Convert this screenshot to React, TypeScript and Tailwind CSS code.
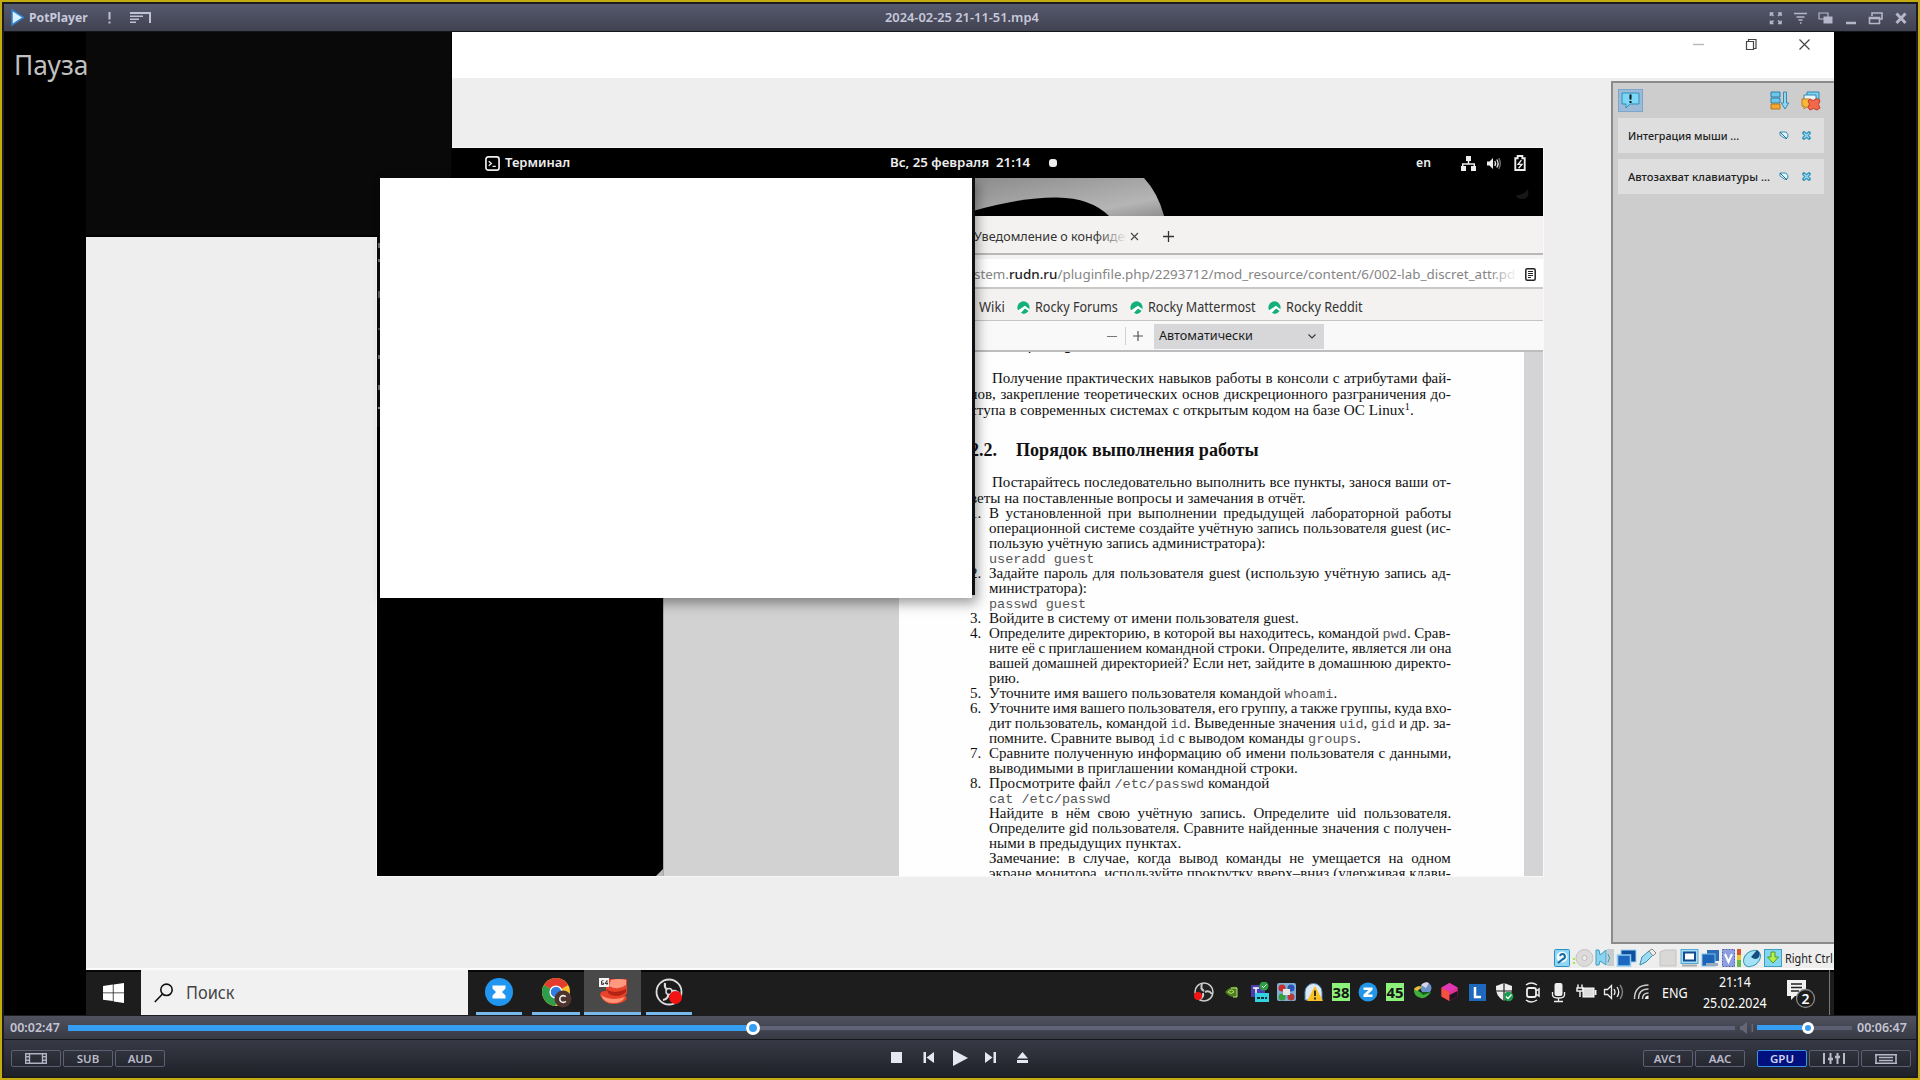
import React, { useLayoutEffect, useRef, useState } from "react";

type FitProps = { w: number; className?: string; justify?: boolean; children: React.ReactNode };

/* Text set to an exact measure, either by stretching glyphs or by opening the word gaps. */
function Fit({ w, className = "", justify = false, children }: FitProps) {
  const ref = useRef<HTMLSpanElement>(null);
  const [style, setStyle] = useState<React.CSSProperties>({});
  useLayoutEffect(() => {
    const el = ref.current;
    if (!el) return;
    const natural = el.offsetWidth;
    const gaps = (el.textContent || "").split(" ").length - 1;
    if (justify && gaps > 0) setStyle({ wordSpacing: (w - natural) / gaps });
    else setStyle({ transform: `scaleX(${w / natural})` });
  }, [w, justify]);
  return (
    <span className={"block shrink-0 whitespace-nowrap " + className} style={{ width: w }}>
      <span ref={ref} className="inline-block origin-left whitespace-nowrap" style={style}>
        {children}
      </span>
    </span>
  );
}

const M = ({ children }: { children: React.ReactNode }) => (
  <span className="font-['Liberation_Mono',monospace] text-[13.5px] leading-none text-[#555]">{children}</span>
);

type Line = { n?: string; w: number; j?: boolean; t: React.ReactNode };

const listLines: Line[] = [
  { n: "1.", w: 462, j: true, t: "В установленной при выполнении предыдущей лабораторной работы" },
  { w: 462, j: true, t: "операционной системе создайте учётную запись пользователя guest (ис-" },
  { w: 276, t: "пользую учётную запись администратора):" },
  { w: 105, t: <M>useradd guest</M> },
  { n: "2.", w: 462, j: true, t: "Задайте пароль для пользователя guest (использую учётную запись ад-" },
  { w: 98, t: "министратора):" },
  { w: 97, t: <M>passwd guest</M> },
  { n: "3.", w: 310, t: "Войдите в систему от имени пользователя guest." },
  { n: "4.", w: 462, j: true, t: <>Определите директорию, в которой вы находитесь, командой <M>pwd</M>. Срав-</> },
  { w: 462, j: true, t: "ните её с приглашением командной строки. Определите, является ли она" },
  { w: 462, j: true, t: "вашей домашней директорией? Если нет, зайдите в домашнюю директо-" },
  { w: 30, t: "рию." },
  { n: "5.", w: 348, t: <>Уточните имя вашего пользователя командой <M>whoami</M>.</> },
  { n: "6.", w: 462, j: true, t: "Уточните имя вашего пользователя, его группу, а также группы, куда вхо-" },
  { w: 462, j: true, t: <>дит пользователь, командой <M>id</M>. Выведенные значения <M>uid</M>, <M>gid</M> и др. за-</> },
  { w: 372, t: <>помните. Сравните вывод <M>id</M> с выводом команды <M>groups</M>.</> },
  { n: "7.", w: 462, j: true, t: "Сравните полученную информацию об имени пользователя с данными," },
  { w: 309, t: "выводимыми в приглашении командной строки." },
  { n: "8.", w: 280, t: <>Просмотрите файл <M>/etc/passwd</M> командой</> },
  { w: 122, t: <M>cat /etc/passwd</M> },
  { w: 462, j: true, t: "Найдите в нём свою учётную запись. Определите uid пользователя." },
  { w: 462, j: true, t: "Определите gid пользователя. Сравните найденные значения с получен-" },
  { w: 192, t: "ными в предыдущих пунктах." },
  { w: 462, j: true, t: "Замечание: в случае, когда вывод команды не умещается на одном" },
  { w: 462, j: true, t: "экране монитора, используйте прокрутку вверх–вниз (удерживая клави-" },
];

function DocumentPage() {
  return (
    <div className="h-full w-[625px] overflow-hidden bg-[#fefefe] pl-[71px] font-['Liberation_Serif',serif] text-[15px] text-[#111]">
      <div className="-mt-[18px] h-[18px] pl-[46px] text-[18px] leading-[18px] font-bold">
        <Fit w={112}>Цель работы</Fit>
      </div>
      <div className="mt-[18px] leading-[16px]">
        <div className="pl-[22px]"><Fit w={459} justify>Получение практических навыков работы в консоли с атрибутами фай-</Fit></div>
        <Fit w={481} justify>лов, закрепление теоретических основ дискреционного разграничения до-</Fit>
        <Fit w={444}>ступа в современных системах с открытым кодом на базе ОС Linux<sup className="top-[-5px] text-[10px] leading-none">1</sup>.</Fit>
      </div>
      <div className="mt-[23px] flex h-[18px] gap-[19px] text-[18px] leading-[18px] font-bold">
        <Fit w={27}>2.2.</Fit>
        <Fit w={243}>Порядок выполнения работы</Fit>
      </div>
      <div className="mt-[16px] leading-[15.5px]">
        <div className="pl-[22px]"><Fit w={459} justify>Постарайтесь последовательно выполнить все пункты, занося ваши от-</Fit></div>
        <Fit w={335}>веты на поставленные вопросы и замечания в отчёт.</Fit>
      </div>
      {listLines.map((l, i) => (
        <div key={i} className="flex h-[15.02px] leading-[15px]">
          <span className="w-[19px] shrink-0">{l.n}</span>
          <Fit w={l.w} justify={l.j}>{l.t}</Fit>
        </div>
      ))}
    </div>
  );
}

const RockyMark = () => (
  <svg viewBox="0 0 14 14" className="h-[13px] w-[13px]">
    <circle cx="7" cy="7" r="6.600" fill="#14b07c" />
    <path d="M.5 10.500 8.500 5l5 4-1 1.800-3.800-2.800-5.200 5.500z" fill="#fff" />
    <path d="M6 13.500 9 10.800l2 1.700q-2 1.500-5 1z" fill="#14b07c" />
  </svg>
);

function Browser() {
  const marks: [string, number][] = [["Rocky Forums", 83], ["Rocky Mattermost", 108], ["Rocky Reddit", 77]];
  return (
    <div className="flex h-full w-[880px] flex-col font-['Noto_Sans',sans-serif] text-[13px] text-[#333]">
      <div className="flex h-[39px] items-center border-b-2 border-[#b9b8b6] bg-[#f4f2f0] pt-[4px] pl-[311px]">
        <div className="relative">
          <Fit w={150}>Уведомление о конфиде</Fit>
          <span className="absolute inset-y-0 right-0 w-[28px] bg-gradient-to-r from-transparent to-[#f4f2f0]/90" />
        </div>
        <svg viewBox="0 0 9 9" className="ml-[6px] h-[9px] w-[9px]" stroke="#444" strokeWidth="1.1"><path d="M1 1l7 7M8 1L1 8" /></svg>
        <svg viewBox="0 0 11 11" className="ml-[24px] h-[11px] w-[11px]" stroke="#333" strokeWidth="1.3"><path d="M5.5 0v11M0 5.5h11" /></svg>
      </div>
      <div className="flex h-[34px] items-center border-t-[4px] border-b-2 border-t-[#f3f3f2] border-b-[#c9c8c6] bg-white pt-[3px] pl-[311px] text-[#858585]">
        <div className="relative">
          <Fit w={541}>
            stem.<span className="font-medium text-[#1d1d1d]">rudn.ru</span>/pluginfile.php/2293712/mod_resource/content/6/002-lab_discret_attr.pd
          </Fit>
          <span className="absolute inset-y-0 right-0 w-[26px] bg-gradient-to-r from-transparent to-white/90" />
        </div>
        <svg viewBox="0 0 11 13" className="ml-[10px] h-[13px] w-[11px]" fill="none" stroke="#222" strokeWidth="1.5">
          <rect x="0.8" y="0.8" width="9.4" height="11.4" rx="1.5" />
          <path d="M3 3.5h5M3 5.5h5M3 7.5h5M3 9.5h3" strokeWidth="1" />
        </svg>
      </div>
      <div className="flex h-[32px] items-center border-b border-[#c6c5c3] bg-[#f4f2f0] pt-[5px] pl-[316px] text-[13.5px]">
        <Fit w={26}>Wiki</Fit>
        {marks.map(([t, w]) => (
          <div key={t} className="flex items-center gap-[5px] pl-[12px]"><RockyMark /><Fit w={w}>{t}</Fit></div>
        ))}
      </div>
      <div className="flex h-[31px] items-center border-b-2 border-[#bdbdbf] bg-[#f9f9fa] pt-px pl-[444px]">
        <span className="h-px w-[10px] bg-[#777]" />
        <span className="ml-[8px] h-[18px] w-px bg-[#d2d2d2]" />
        <svg viewBox="0 0 10 10" className="ml-[7px] h-[10px] w-[10px]" stroke="#555" strokeWidth="1.2"><path d="M5 0v10M0 5h10" /></svg>
        <div className="ml-[11px] flex h-[25px] w-[170px] items-center justify-between bg-[#d7d7da] pr-[8px] pl-[5px] text-[12.5px] text-[#1c1c1c]">
          <Fit w={94}>Автоматически</Fit>
          <svg viewBox="0 0 8 5" className="h-[5px] w-[8px]" fill="none" stroke="#333" strokeWidth="1.1"><path d="M.5.5 4 4 7.5.5" /></svg>
        </div>
      </div>
      <div className="flex min-h-0 flex-1">
        <div className="w-[236px] border-l border-[#aaa] bg-[#d2d2d2]" />
        <DocumentPage />
        <div className="w-[19px] bg-[#d4d4d6]" />
      </div>
    </div>
  );
}

function GuestScreen() {
  return (
    <div className="mt-[70px] ml-[291px] flex h-[728px] w-[1166px] flex-col bg-black outline outline-[#f8f8f8]">
      <div className="flex h-[30px] items-center font-['Noto_Sans',sans-serif] text-[13px] font-semibold text-[#eee]">
        <svg viewBox="0 0 16 16" className="ml-[108px] h-[15px] w-[15px]" fill="none" stroke="#eee" strokeWidth="1.8">
          <rect x="1" y="1" width="14" height="14" rx="2.5" /><path d="M4 5.5 6.8 8 4 10.5M8 11h3.5" strokeWidth="1.4" />
        </svg>
        <Fit w={65} className="ml-[5px]">Терминал</Fit>
        <Fit w={140} className="ml-[320px]">Вс, 25 февраля&nbsp; 21:14</Fit>
        <span className="ml-[19px] h-[8px] w-[8px] rounded-[3px] bg-[#eee]" />
        <Fit w={15} className="ml-[359px]">en</Fit>
        <svg viewBox="0 0 15 15" className="ml-[30px] h-[15px] w-[15px]" fill="#eee">
          <path d="M5 0h5v5H5zM0 10h5v5H0zM10 10h5v5h-5zM6.8 5h1.4v2.3H14V10h-1.4V8.8H2.4V10H1V7.3h5.8z" />
        </svg>
        <svg viewBox="0 0 14 13" className="ml-[11px] h-[13px] w-[14px]" fill="none" stroke="#eee" strokeWidth="1.3">
          <path d="M0 4.5h2.5L6 1v11L2.500 8.500H0z" fill="#eee" stroke="none" /><path d="M7.800 4q1.600 2.500 0 5M9.800 2.500q2.600 4 0 8" /><path d="M11.800 1q3 5.500 0 11" stroke="#777" />
        </svg>
        <svg viewBox="0 0 12 17" className="ml-[13px] h-[16px] w-[12px]" fill="none" stroke="#eee" strokeWidth="2">
          <path d="M1 3.500h2.500V1h5v2.500H11V16H1z" /><path d="M7.500 5.500 4 10h4l-3.500 4" strokeWidth="1.500" />
        </svg>
      </div>
      <div className="h-[38px] pl-[596px]">
        <svg viewBox="0 0 570 38" className="h-[38px] w-[570px]">
          <defs><linearGradient id="wall" x1="0" x2="1" y1="0" y2="1"><stop offset="0" stopColor="#8c8c8c" /><stop offset=".75" stopColor="#b5b5b5" /><stop offset="1" stopColor="#8f8f8f" /></linearGradient></defs>
          <path d="M0 0H171q14 15 20 38H0z" fill="url(#wall)" />
          <path d="M0 33Q50 19 84 19.500T136 38H0z" fill="#000" />
          <path d="M543 17q8 0 12-6 2 10-6 10-5 0-6-4z" fill="#171717" />
        </svg>
      </div>
      <div className="flex min-h-0 flex-1">
        <div className="flex w-[286px] items-end justify-end">
          <svg viewBox="0 0 7 7" className="h-[7px] w-[7px]"><path d="M7 0v7H0z" fill="#bbb" /></svg>
        </div>
        <Browser />
      </div>
    </div>
  );
}

function Notice({ text, w }: { text: string; w: number }) {
  return (
    <div className="flex h-[35px] w-[206px] items-center bg-[#dedede] pl-[10px] font-['Noto_Sans',sans-serif] text-[11.5px] font-medium text-[#222]">
      <Fit w={w}>{text}</Fit>
      <div className="ml-auto flex items-center gap-[13px] pr-[13px]">
        <svg viewBox="0 0 10 9" className="h-[9px] w-[10px]"><path d="M1 1h6q2.500 2 2 5L6 7.500 1 4z" fill="#dff3fa" stroke="#3a8fb0" /><path d="M1 1l7 7" stroke="#2a6f8c" /></svg>
        <svg viewBox="0 0 9 9" className="h-[9px] w-[9px]"><path d="M2 2l5 5M7 2l-5 5" stroke="#3191b5" strokeWidth="3.600" strokeLinecap="round" /><path d="M2 2l5 5M7 2l-5 5" stroke="#9bdcf2" strokeWidth="1.300" /></svg>
      </div>
    </div>
  );
}

function DeviceBar() {
  return (
    <div className="ml-auto flex h-[24px] w-[280px] items-start pt-[4px] font-['Noto_Sans',sans-serif] text-[12px] text-[#222]">
      <svg viewBox="1554 948 230 20" className="h-[20px] w-[230px] shrink-0">
        <rect x="1554.500" y="949.500" width="15" height="17" rx="1" fill="#8fd6f5" stroke="#2b8fc0" />
        <circle cx="1562" cy="957" r="5.500" fill="#eefaff" /><path d="M1560 956a2.500 2.500 0 1 1 3 3l-5 4" stroke="#1565a0" strokeWidth="2" fill="none" />
        <path d="M1573 958h2v2h-2zM1573 962h2v2h-2z" fill="#a9e34b" />
        <circle cx="1584.500" cy="958" r="8.500" fill="#dddbda" stroke="#c6c4c3" /><circle cx="1584.500" cy="958" r="2.500" fill="#eee" stroke="#bbb" />
        <path d="M1607 949h7v17h-7z" fill="#c5cdd0" /><path d="M1596 950h3l1 5 6-5v15l-6-4-1 4h-3z" fill="#8bd4ef" stroke="#3d9cc0" /><path d="M1608 954q3 4 0 8" stroke="#3d9cc0" fill="none" />
        <rect x="1621" y="950" width="15" height="12" fill="#0e4f9e" stroke="#9cd2f0" /><rect x="1617.500" y="955" width="13" height="11" fill="#1c68c0" stroke="#8fcaf0" strokeWidth="1.500" />
        <path d="M1640 964l2-7 7-6 4 4-7 7-6 3z" fill="#9bdcf2" stroke="#3a8eb0" /><path d="M1649 951l3-2 4 4-3 3z" fill="#eee" stroke="#888" />
        <path d="M1660 952l5-2h11v16h-16z" fill="#dad8d6" stroke="#c4c2c0" />
        <rect x="1681" y="949.500" width="17" height="14" fill="#a4ddf7" stroke="#58a8cf" /><rect x="1684" y="952.500" width="11" height="8" fill="#fff" stroke="#124d93" strokeWidth="2" /><path d="M1682 965.500h15" stroke="#aaa" strokeWidth="2" />
        <rect x="1707" y="950" width="12" height="11" fill="#2b6cb8" /><rect x="1702" y="954" width="13" height="12" fill="#1c64b8" stroke="#7dbde8" /><path d="M1706 963h12v3h-12z" fill="#9ab" />
        <rect x="1722.500" y="949.500" width="12" height="17" fill="#8d9fe0" stroke="#5560b0" strokeDasharray="2 1" /><path d="M1725 954l3.500 8 3.500-8" stroke="#fff" strokeWidth="2" fill="none" />
        <path d="M1737 949h4v6h-4z" fill="#d4552f" /><path d="M1737 955h4v5h-4z" fill="#e7c832" /><path d="M1737 960h4v7h-4z" fill="#65b947" />
        <ellipse cx="1752" cy="958.500" rx="9.500" ry="7" transform="rotate(-40 1752 958.500)" fill="#a6e2f5" stroke="#3f9abd" /><path d="M1751 957l6-7q4 3 2 7-3 4-8 0z" fill="#154d80" />
        <rect x="1764.500" y="949.500" width="17" height="17" fill="#83d6f0" stroke="#3b9fc4" /><path d="M1771 952h4v5h3.500l-5.500 6-5.500-6h3.500z" fill="#b8f04a" stroke="#4d9a2a" />
      </svg>
      <Fit w={48} className="ml-px pt-px leading-[19px]">Right Ctrl</Fit>
    </div>
  );
}

function VmWindow() {
  return (
    <div className="flex h-[938px] w-full flex-col bg-[#eee]">
      <div className="flex h-[46px] justify-end bg-white pt-[6px]">
        <svg viewBox="0 0 118 13" className="mr-[23px] h-[13px] w-[118px]" fill="none" stroke="#444">
          <path d="M0 6.500h11" stroke="#bbb" strokeWidth="1.500" />
          <path d="M53.500 3.500h7v8h-7zM55.500 3.500v-2h7.500v9h-2" strokeWidth="1.200" />
          <path d="M106.500 1.500l10 10M116.500 1.500l-10 10" strokeWidth="1.200" />
        </svg>
      </div>
      <div className="flex h-[866px]">
        <div className="w-[1525px]"><GuestScreen /></div>
        <div className="mt-[3px] flex-1 border-t-2 border-b-2 border-l-2 border-[#8b8b8b] bg-[#cdcdcd] pl-[5px]">
          <div className="flex h-[35px] items-center">
            <div className="flex h-[23px] w-[25px] items-center justify-center border border-[#7aa6cc] bg-[#9dbbd8]">
              <svg viewBox="0 0 19 17" className="h-[17px] w-[19px]"><path d="M1 1h17v11H9l-4 4v-4H1z" fill="#7cd6f5" stroke="#2c8fb8" /><path d="M9.500 2.500v5M9.500 9v2" stroke="#111" strokeWidth="2" /></svg>
            </div>
            <svg viewBox="0 0 19 19" className="ml-[127px] h-[19px] w-[19px]">
              <path d="M1 1h9v5H1zM1 7h9v5H1z" fill="#6cc7ea" stroke="#2c7fa5" /><path d="M1 13h9v5H1z" fill="#f3a833" stroke="#b9761c" /><path d="M13.500 1h3v11h2.200L15 18l-3.700-6h2.200z" fill="#8fd8f4" stroke="#3889ad" />
            </svg>
            <svg viewBox="0 0 20 20" className="ml-[12px] h-[20px] w-[20px]">
              <path d="M6 1h12v8H6z" fill="#7fd3f2" stroke="#2f86ad" /><path d="M3 4h12v7H3z" fill="#e7f6fc" stroke="#2f86ad" /><path d="M1 8h8v8H5l-2 2v-3H1z" fill="#f8b93b" stroke="#c07d1c" /><path d="M9 8l3 1.500 4-2 3 2-1.500 4L19 17l-3 2-3.500-1.500L9 19l-2-2.500L8.500 13 7 10z" fill="#f0694a" stroke="#c53b22" />
            </svg>
          </div>
          <div className="flex flex-col gap-[6px]">
            <Notice text="Интеграция мыши ..." w={111} />
            <Notice text="Автозахват клавиатуры ..." w={142} />
          </div>
        </div>
      </div>
      <DeviceBar />
      <div className="h-[2px] bg-[#fafafa]" />
    </div>
  );
}

const ObsIcon = ({ className }: { className: string }) => (
  <svg viewBox="0 0 28 28" className={className} fill="none">
    <circle cx="14" cy="14" r="12.500" fill="#1c1c1c" stroke="#ddd" strokeWidth="1.800" />
    <path d="M14 13q-5-2-4-8M15 14q6-3 9 2M13 15q1 6-5 7" stroke="#ddd" strokeWidth="2.200" />
    <circle cx="14" cy="13.500" r="3" fill="#1c1c1c" stroke="#ddd" strokeWidth="1.500" />
  </svg>
);

function Taskbar() {
  return (
    <div className="flex h-[45px] w-full bg-[#1d1d1d] font-['Noto_Sans',sans-serif] text-white shadow-[inset_0_2px_0_#070707]">
      <div className="flex w-[55px] items-center justify-end pr-[17px]">
        <svg viewBox="0 0 21 20" className="h-[20px] w-[21px]" fill="#fff"><path d="M0 3l9.800-1.400v7.900H0zM10.600 1.500 21 0v9.500H10.600zM0 10.300h9.800V18L0 16.700zM10.600 10.300H21V20l-10.400-1.600z" /></svg>
      </div>
      <div className="flex w-[327px] items-center bg-[#f1f1f1] pl-[13px] text-[18px] text-[#444]">
        <svg viewBox="0 0 19 20" className="h-[20px] w-[19px]" fill="none" stroke="#111" strokeWidth="1.600"><circle cx="12.500" cy="6.800" r="5.700" /><path d="M8.500 11 .8 19" /></svg>
        <Fit w={49} className="ml-[13px]">Поиск</Fit>
      </div>
      <div className="ml-[8px] flex w-[46px] items-start justify-center border-b-3 border-[#76b9ed] pt-[8px]">
        <svg viewBox="0 0 28 28" className="h-[28px] w-[28px]"><circle cx="14" cy="14" r="14" fill="#2196f0" /><path d="M7.500 7.500h13v3L17 14l3.500 3.500v3h-13v-3L11 14l-3.500-3.500z" fill="#fff" /></svg>
      </div>
      <div className="ml-[10px] flex w-[48px] items-start justify-center border-b-3 border-[#76b9ed] pt-[8px] pl-[2px]">
        <svg viewBox="0 0 30 30" className="h-[30px] w-[30px]">
          <circle cx="14" cy="14" r="14" fill="#fbc02d" /><path d="M14 14 1.900 7A14 14 0 0 1 26.100 7z" fill="#e33b2e" /><path d="M14 14 1.900 7A14 14 0 0 0 13 28l5-10z" fill="#2e9e4b" />
          <circle cx="14" cy="14" r="6.600" fill="#fff" /><circle cx="14" cy="14" r="5.200" fill="#2f7de1" />
          <circle cx="21" cy="21" r="8.500" fill="#4e342e" /><path d="M23.800 18.800a3.400 3.400 0 1 0 0 4.400" stroke="#eee" strokeWidth="1.600" fill="none" />
        </svg>
      </div>
      <div className="ml-[4px] flex w-[57px] items-start justify-center border-b-3 border-[#76b9ed] bg-[#494949] pt-[8px]">
        <svg viewBox="0 0 28 26" className="h-[26px] w-[28px]">
          <path d="M7 1h21v10q2 4-2 6 3 4 1 5-4 4-13 4T1 17q0-4 6-4z" fill="#e8432a" />
          <path d="M12 2q8-2 15 0v5q-8 6-17 1z" fill="#ff9a80" />
          <path d="M7 11q8 6 20 0v3q-8 7-17 2z" fill="#b32414" />
          <path d="M2 17q10 7 24 2-3 6-12 6T2 17z" fill="#ff9476" />
          <rect width="10" height="9" fill="#f5f5f5" /><path d="M4.500 2.500 2.500 3v3.500h2V5h-2M8 7V2.500L6 5.500h3" stroke="#333" fill="none" strokeWidth=".9" />
        </svg>
      </div>
      <div className="ml-[5px] flex w-[46px] items-start justify-center border-b-3 border-[#76b9ed] pt-[8px]">
        <div className="relative">
          <ObsIcon className="h-[28px] w-[28px]" />
          <span className="absolute right-[1px] bottom-[2px] h-[13px] w-[13px] rounded-full bg-[#f31313]" />
        </div>
      </div>
      <div className="ml-[502px] flex w-[458px] pt-[12px]">
        <svg viewBox="1194 982 458 22" className="h-[22px] w-[458px] shrink-0" fill="none">
          <circle cx="1204" cy="992" r="9" stroke="#ccc" strokeWidth="1.500" fill="#222" /><path d="M1204 991q-4-2-2-7M1205 992q4-2 7 2M1203 993q1 4-3 6" stroke="#ccc" strokeWidth="2" /><circle cx="1198" cy="996" r="4" fill="#f01414" />
          <path d="M1225 992q5-6 12-5v10q-8 1-12-5z" fill="#4c7d21" /><path d="M1228 992q4-4 6 0-3 3-6 0zM1231 988h6v9h-4" stroke="#b7e36b" />
          <rect x="1251" y="985" width="14" height="12" fill="#4a3fae" /><path d="M1253 988h6M1256 988v7" stroke="#fff" strokeWidth="1.500" /><rect x="1255" y="993" width="14" height="9" fill="#35d3e0" /><path d="M1257 998h10" stroke="#134" strokeWidth="2" strokeDasharray="3 1" /><circle cx="1264" cy="986" r="4.500" fill="#2ea043" /><path d="M1262 986l1.500 1.500 3-3" stroke="#fff" />
          <rect x="1277" y="983" width="19" height="18" rx="2" fill="#7faed6" /><circle cx="1282" cy="988" r="3.500" fill="#c92c2c" /><circle cx="1291" cy="988" r="3.500" fill="#2d53b5" /><circle cx="1282" cy="997" r="3.500" fill="#37a03c" /><circle cx="1291" cy="997" r="3.500" fill="#b63a3a" /><rect x="1283" y="989" width="7" height="6" fill="#e6e6e6" />
          <path d="M1305 1000v-8a8.500 8.500 0 0 1 17 0v8z" fill="#dfe9f2" stroke="#4c82b8" /><path d="M1315 986l8 15h-16z" fill="#fbc225" /><path d="M1315 990.500v5.500M1315 997.500v2" stroke="#222" strokeWidth="1.800" />
          <rect x="1332" y="983" width="18" height="18" fill="#8cf27c" /><rect x="1386" y="983" width="18" height="18" fill="#8cf27c" />
          <text x="1332.500" y="998" fontSize="15" fontWeight="700" fill="#151515" textLength="17" lengthAdjust="spacingAndGlyphs">38</text>
          <text x="1386.500" y="998" fontSize="15" fontWeight="700" fill="#151515" textLength="17" lengthAdjust="spacingAndGlyphs">45</text>
          <circle cx="1368" cy="992" r="9.500" fill="#2196e8" /><path d="M1363.500 987.500h9v2.500l-5 4.500h5v2.500h-9v-2.500l5-4.500h-5z" fill="#fff" />
          <circle cx="1426" cy="988" r="5.500" fill="#6c93c7" /><path d="M1421 985q4-4 8-2l-3 5z" fill="#d9d5ea" /><path d="M1414 989q3-4 8-2l-4 4q4 3 13 1-5 7-10 6-8-2-7-9z" fill="#3faf3a" /><path d="M1414 989q3-4 8-2l-5 4z" fill="#f2b53a" /><path d="M1420 992l11 0-8 3z" fill="#145c20" />
          <path d="M1449.500 983l8 4.500v9l-8 4.500-8-4.500v-9z" fill="#ef2a72" /><path d="M1441.500 987.500l8 4.500v9l-8-4.500z" fill="#f3503d" /><path d="M1449.500 992l8-4.500v4l-8 4.500z" fill="#e0308f" /><path d="M1449.500 995l8-4v5.500l-8 4.500z" fill="#201326" /><path d="M1449.500 983l8 4.500-8 4.500-8-4.500z" fill="#dd37b5" />
          <rect x="1469" y="984" width="17" height="17" fill="#1e68bd" /><path d="M1475 987v10h6" stroke="#fff" strokeWidth="2.500" />
          <path d="M1504 983l8 3q1 10-8 15-9-5-8-15z" fill="#eee" /><path d="M1504 983v18M1496 991h16" stroke="#222" strokeWidth="1.200" /><circle cx="1508.500" cy="996.500" r="4.800" fill="#1f9a50" /><path d="M1506 996.500l2 2 3.500-4" stroke="#fff" strokeWidth="1.200" />
          <rect x="1527" y="988" width="9" height="9" rx="2" stroke="#eee" strokeWidth="1.800" /><path d="M1536 991l3-2v7l-3-2M1526 985q5-4 11 0M1526 1000q5 4 11 0" stroke="#eee" strokeWidth="1.500" />
          <rect x="1554.500" y="983" width="8" height="13" rx="2" fill="#eee" /><path d="M1552.500 992v3q0 3 6 3t6-3v-3M1558.500 998v3M1554 1001.500h9" stroke="#eee" strokeWidth="1.300" />
          <path d="M1578 984.500v3M1582 984.500v3M1577 988h6v3h-6zM1580 991v6" stroke="#eee" strokeWidth="1.500" /><rect x="1583" y="988" width="11" height="9" fill="#ddd" stroke="#fff" /><path d="M1595.500 990v5" stroke="#eee" strokeWidth="2" />
          <path d="M1604.500 989.500h3l4-4v13l-4-4h-3zM1614 989q2 3 0 6M1617 987q3.500 5 0 10" stroke="#eee" strokeWidth="1.300" /><path d="M1620 985q5 7 0 14" stroke="#888" strokeWidth="1.300" />
          <path d="M1634.500 999q0-14 14-14M1638.500 999q0-10 10-10M1642.500 999q0-6 6-6" stroke="#ccc" strokeWidth="1.400" /><path d="M1645 999q0-3.500 3.500-3.500v3.500z" fill="#eee" />
        </svg>
      </div>
      <div className="ml-[10px] flex items-center pt-[2px] text-[15px]">
        <Fit w={26} className="-mt-[3px]">ENG</Fit>
        <div className="ml-[15px] -mt-[2px] flex w-[64px] flex-col items-center text-[14px] leading-[20.5px]">
          <Fit w={32}>21:14</Fit>
          <Fit w={64}>25.02.2024</Fit>
        </div>
        <svg viewBox="0 0 30 30" className="ml-[20px] h-[30px] w-[30px]">
          <path d="M0 1h19v16H8l-4 4v-4H0z" fill="#f1f1f1" /><path d="M4 5h11M4 8.500h11M4 12h8" stroke="#222" strokeWidth="1.300" />
          <circle cx="18.500" cy="19.500" r="9" fill="#1d1d1d" stroke="#888" strokeWidth="1.300" />
          <text x="18.500" y="24.500" fontSize="14" fontWeight="600" fill="#fff" textAnchor="middle">2</text>
        </svg>
        <span className="-mt-[2px] ml-[12px] h-[45px] w-px bg-[#777]" />
      </div>
    </div>
  );
}

const chip =
  "flex h-[17px] w-[50px] items-center justify-center rounded-[2px] border border-[#5d6072] text-[11.5px] font-semibold leading-none text-[#b9bac9]";

export default function App() {
  return (
    <div className="h-[1080px] w-[1920px] overflow-hidden border-2 border-[#c3ab10] font-['Noto_Sans',sans-serif]">
      <div className="flex h-full flex-col border-2 border-[#1b1b20] bg-[#1b1b20]">
        <header className="flex h-[28px] items-center border-b border-[#14141a] bg-gradient-to-b from-[#565a6d] to-[#414251] text-[12px] font-semibold text-[#c7c8db]">
          <svg viewBox="0 0 13 17" className="ml-[7px] h-[17px] w-[13px]"><path d="M1 1l11.500 7.500L1 16z" fill="#d9efff" stroke="#2d83d0" strokeWidth="1.500" /></svg>
          <Fit w={59} className="ml-[5px] font-bold">PotPlayer</Fit>
          <svg viewBox="0 0 44 12" className="ml-[20px] h-[12px] w-[44px]" fill="#c0c1d2"><path d="M.5 0h2v7.500h-2zM.5 9.500h2v2h-2zM22 0h21v11h-2V2H22zM22 3.500h13v1.500H22zM22 6.500h9V8h-9zM22 9.500h6V11h-6z" /></svg>
          <Fit w={154} className="ml-[733px] font-semibold">2024-02-25 21-11-51.mp4</Fit>
          <svg viewBox="0 0 138 14" className="mr-[9px] ml-auto h-[14px] w-[138px]" fill="none" stroke="#b5b6c9" strokeWidth="1.600">
            <path d="M1.500 5V2h3M9 2h3v3M12 9.500v3H9M4.500 12.500h-3v-3M2 2.500l2.500 2.500M11.500 2.500 9 5M11.500 12 9 9.500M2 12l2.500-2.500" />
            <path d="M25 2.500h13M27.500 6h8M29.500 9h4M31 12h1.500" strokeWidth="1.700" />
            <path d="M50 2h9v6h-9z" strokeWidth="1.200" /><path d="M54.500 5.500h9v7h-9z" fill="#b5b6c9" stroke="none" />
            <path d="M77 12h10" strokeWidth="2.500" /><path d="M103 5V2h10v6h-2.500M100.500 6.500h10v6h-10z" /><path d="M100 7.500h11" />
            <path d="M127.500 2.500l9 9.500M136.500 2.500l-9 9.500" strokeWidth="3" />
          </svg>
        </header>

        <main className="relative flex h-[983px] bg-black pl-[82px]">
          <div className="relative flex w-[1748px] flex-col overflow-hidden">
            <VmWindow />
            <Taskbar />
            {/* Masked regions of the recorded desktop */}
            <div className="absolute top-0 left-0 h-[205px] w-[366px] border-r border-b-2 border-[#020202] bg-[#090909]" />
            <div className="absolute top-[146px] left-[294px] h-[420px] w-[592px] bg-white shadow-[5px_5px_12px_rgba(0,0,0,0.4)]" />
            <div className="absolute top-[146px] left-[886px] h-[417px] w-[3px] bg-[#0d0f12]" />
            <div className="absolute top-[205px] left-[291px] flex h-[190px] w-[3px] flex-col items-end bg-[#0b0b0b]">
              <span className="mt-[6px] h-[5px] w-[2px] bg-[#666]" />
              <span className="mt-[11px] h-[3px] w-[2px] bg-[#666]" />
              <span className="mt-[29px] h-[7px] w-[2px] bg-[#555]" />
              <span className="mt-[30px] h-[2px] w-[2px] bg-[#444]" />
              <span className="mt-[25px] h-[4px] w-[2px] bg-[#666]" />
              <span className="mt-[26px] h-[5px] w-[2px] bg-[#666]" />
              <span className="mt-[17px] h-[2px] w-[2px] bg-[#888]" />
            </div>
          </div>
          <div className="absolute top-[15px] left-[10px] text-[27px] leading-[36px] text-[#c0c0c0]"><Fit w={74}>Пауза</Fit></div>
        </main>

        <div className="flex h-[25px] items-center border-t border-b border-t-[#1b1b22] border-b-[#16161c] bg-gradient-to-b from-[#50525f] to-[#373944] text-[13px] font-semibold text-[#c3c4d3]">
          <Fit w={50} className="ml-[6px]">00:02:47</Fit>
          <div className="ml-[8px] flex h-[6px] w-[1667px] items-center border-y border-[#434556] bg-[#606375]">
            <div className="h-[6px] w-[678px] bg-[#359df2]" />
            <span className="h-[14px] w-[14px] shrink-0 rounded-full border-[3px] border-white bg-[#359df2]" />
          </div>
          <svg viewBox="0 0 13 12" className="ml-[5px] h-[12px] w-[13px]" fill="#656779"><path d="M0 4h2l5-4v12L2 8H0zM11.500 2h1.500v8h-1.500z" /></svg>
          <div className="ml-[4px] flex h-[4px] w-[95px] items-center bg-[#5c5f71]">
            <div className="h-[5px] w-[45px] bg-[#359df2]" />
            <span className="h-[12px] w-[12px] shrink-0 rounded-full border-[3px] border-white bg-[#359df2]" />
          </div>
          <Fit w={50} className="ml-[5px]">00:06:47</Fit>
        </div>

        <footer className="flex min-h-0 flex-1 items-center justify-between bg-gradient-to-b from-[#373945] to-[#20222a] pt-px pr-[5px] pl-[7px]">
          <div className="flex w-[268px] gap-[2px]">
            <div className={chip}>
              <svg viewBox="0 0 22 11" className="h-[11px] w-[22px]" fill="none" stroke="#b0b1c2"><path d="M.7.7h20.600v9.600H.7zM4.500.7v9.600M17.500.7v9.600M1 3.700h3M1 7.200h3M18 3.700h3M18 7.200h3" strokeWidth="1.400" /></svg>
            </div>
            <div className={chip}>SUB</div>
            <div className={chip}>AUD</div>
          </div>
          <svg viewBox="892 1050 138 18" className="h-[18px] w-[138px] overflow-visible" fill="#e6e7f0">
            <path d="M891 1052h11v11h-11zM923.500 1052h2.500v11h-2.500zM934 1052v11l-7.500-5.500zM953 1050l15 8-15 8zM985 1052v11l7.500-5.500zM993.500 1052h2.500v11h-2.500zM1022.500 1052l5.500 6.500h-11zM1017 1060h11v3h-11z" />
          </svg>
          <div className="flex gap-[2px]">
            <div className={chip}>AVC1</div>
            <div className={chip}>AAC</div>
            <div className="ml-[10px] flex h-[17px] w-[50px] items-center justify-center rounded-[2px] border border-[#3b93e6] bg-[#00107f] text-[11.5px] leading-none font-semibold text-[#cfd3ef]">GPU</div>
            <div className={chip}>
              <svg viewBox="0 0 22 11" className="h-[11px] w-[22px]" stroke="#b9bac9" strokeWidth="2"><path d="M1 0v11M7.500 0v11M14.500 0v11M21 0v11" /><path d="M5 6h5M12 4h5" strokeWidth="2.500" /></svg>
            </div>
            <div className={chip}>
              <svg viewBox="0 0 22 10" className="h-[10px] w-[22px]" stroke="#b9bac9" strokeWidth="1.500"><path d="M0 .8h22M4 3.600h14M4 6.400h14M0 9.200h22M1 0v10M21 0v10" /></svg>
            </div>
          </div>
        </footer>
      </div>
    </div>
  );
}
